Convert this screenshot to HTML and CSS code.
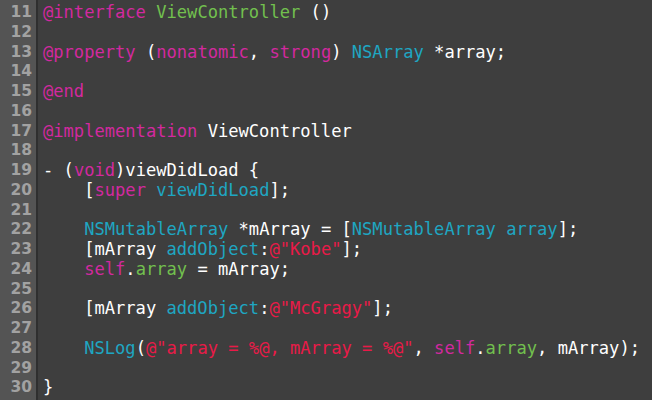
FILE: index.html
```html
<!DOCTYPE html>
<html lang="en">
<head>
  <meta charset="UTF-8">
  <title>ViewController.m</title>
  <link rel="stylesheet" href="styles.css">
</head>
<body>

  <div class="editor">
    <div class="gutter">
      <div>11</div><div>12</div><div>13</div><div>14</div><div>15</div>
      <div>16</div><div>17</div><div>18</div><div>19</div><div>20</div>
      <div>21</div><div>22</div><div>23</div><div>24</div><div>25</div>
      <div>26</div><div>27</div><div>28</div><div>29</div><div>30</div>
    </div>
<pre class="code"><span class="kw">@interface</span> <span class="prop">ViewController</span> ()

<span class="kw">@property</span> (<span class="kw">nonatomic</span>, <span class="kw">strong</span>) <span class="cls">NSArray</span> *array;

<span class="kw">@end</span>

<span class="kw">@implementation</span> ViewController

- (<span class="kw">void</span>)viewDidLoad {
    [<span class="kw">super</span> <span class="cls">viewDidLoad</span>];

    <span class="cls">NSMutableArray</span> *mArray = [<span class="cls">NSMutableArray</span> <span class="cls">array</span>];
    [mArray <span class="cls">addObject</span>:<span class="str">@"Kobe"</span>];
    <span class="kw">self</span>.<span class="prop">array</span> = mArray;

    [mArray <span class="cls">addObject</span>:<span class="str">@"McGragy"</span>];

    <span class="cls">NSLog</span>(<span class="str">@"array = %@, mArray = %@"</span>, <span class="kw">self</span>.<span class="prop">array</span>, mArray);

}</pre>
  </div>

</body>
</html>
```

FILE: styles.css
```css
body {
  margin: 0;
  background-color: #3e3e3e;
  overflow: hidden;
}
.editor {
  display: flex;
  height: 400px;
  font-family: 'DejaVu Sans Mono', 'Liberation Mono', monospace;
  font-size: 17.1px;
  line-height: 19.75px;
}
.gutter {
  width: 38px;
  flex-shrink: 0;
  padding-top: 3px;
  padding-right: 4px;
  box-sizing: border-box;
  background-color: #545454;
  border-right: 2px solid #2f2f2f;
  color: #a2a2a2;
  font-family: 'DejaVu Sans', sans-serif;
  font-size: 15.5px;
  font-weight: bold;
  text-align: right;
}
.code {
  margin: 0;
  padding: 3px 0 0 5px;
  color: #ffffff;
  font: inherit;
  white-space: pre;
}
.kw {
  color: #d2299f;
}
.prop {
  color: #72c04e;
}
.cls {
  color: #1ea6c2;
}
.str {
  color: #e91a48;
}
```
